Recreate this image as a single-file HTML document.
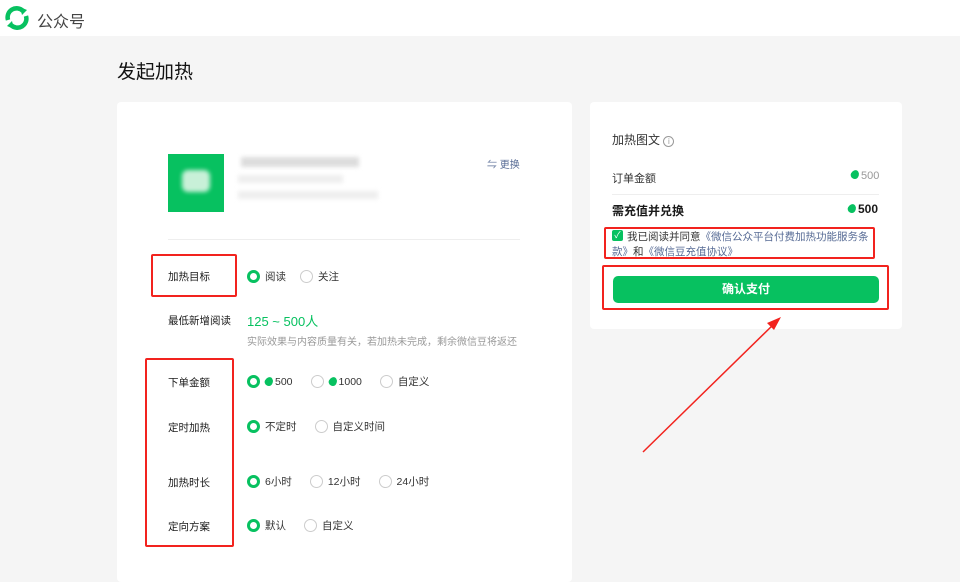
<!DOCTYPE html>
<html><head><meta charset="utf-8"><style>
*{margin:0;padding:0;box-sizing:border-box}
body{width:960px;height:570px;overflow:hidden;background:#f5f5f5;font-family:"Liberation Sans","Noto Sans CJK SC",sans-serif;color:#1a1a1a;position:relative}
.a{position:absolute;white-space:nowrap}
.hdr{position:absolute;left:0;top:0;width:960px;height:36px;background:#fff}
.card{position:absolute;background:#fff;border-radius:4px}
.lbl{font-size:10.5px;color:#1a1a1a}
.opt{font-size:10.5px;color:#333;display:flex;align-items:center}
.r{width:13px;height:13px;border-radius:50%;border:1px solid #ccc;display:inline-block;margin-right:5px}
.r.on{border:3px solid #07c160}
.red{position:absolute;border:2px solid #f2231e;border-radius:2px}
.bean{display:inline-block;width:8px;height:9px;background:#07c160;border-radius:50% 50% 50% 50%/60% 60% 40% 40%;transform:rotate(30deg);margin-right:2px}
.blur{position:absolute;background:#ddd;filter:blur(2px)}
</style></head><body>
<div class="hdr"></div>
<svg class="a" style="left:4px;top:5px" width="26" height="26" viewBox="0 0 26 26"><path d="M4 15A9 9 0 0 1 19 6" fill="none" stroke="#07c160" stroke-width="4.5"/><path d="M22 11A9 9 0 0 1 7 20" fill="none" stroke="#07c160" stroke-width="4.5"/><path d="M16 2l7 3-5 5z" fill="#07c160"/><path d="M10 24l-7-3 5-5z" fill="#07c160"/></svg>
<div class="a" style="left:37px;top:8px;font-size:16px;color:#444">公众号</div>
<div class="a" style="left:117px;top:57px;font-size:19px;color:#111">发起加热</div>

<div class="card" style="left:117px;top:102px;width:455px;height:480px"></div>
<div class="card" style="left:590px;top:102px;width:312px;height:227px"></div>

<div class="a" style="left:168px;top:154px;width:56px;height:58px;background:#07c160"></div>
<div class="a" style="left:182px;top:170px;width:28px;height:22px;background:#c8f0d8;filter:blur(2px);border-radius:6px"></div>
<div class="blur" style="left:241px;top:157px;width:118px;height:10px"></div>
<div class="blur" style="left:238px;top:175px;width:105px;height:8px;background:#eee"></div>
<div class="blur" style="left:238px;top:191px;width:140px;height:8px;background:#eee"></div>
<div class="a" style="left:487px;top:156px;font-size:10px;color:#576b95">⇋ 更换</div>
<div class="a" style="left:168px;top:239px;width:352px;height:1px;background:#eee"></div>

<div class="a lbl" style="left:168px;top:269px">加热目标</div>
<div class="a opt" style="left:247px;top:269px"><span class="r on"></span>阅读<span class="r" style="margin-left:14px"></span>关注</div>
<div class="a lbl" style="left:168px;top:313px">最低新增阅读</div>
<div class="a" style="left:247px;top:311px;font-size:13px;color:#07c160">125 ~ 500人</div>
<div class="a" style="left:247px;top:333px;font-size:10px;color:#999">实际效果与内容质量有关，若加热未完成，剩余微信豆将返还</div>
<div class="a lbl" style="left:168px;top:375px">下单金额</div>
<div class="a opt" style="left:247px;top:374px"><span class="r on"></span><span class="bean"></span>500<span class="r" style="margin-left:18px"></span><span class="bean"></span>1000<span class="r" style="margin-left:18px"></span>自定义</div>
<div class="a lbl" style="left:168px;top:420px">定时加热</div>
<div class="a opt" style="left:247px;top:419px"><span class="r on"></span>不定时<span class="r" style="margin-left:18px"></span>自定义时间</div>
<div class="a lbl" style="left:168px;top:475px">加热时长</div>
<div class="a opt" style="left:247px;top:474px"><span class="r on"></span>6小时<span class="r" style="margin-left:18px"></span>12小时<span class="r" style="margin-left:18px"></span>24小时</div>
<div class="a lbl" style="left:168px;top:519px">定向方案</div>
<div class="a opt" style="left:247px;top:518px"><span class="r on"></span>默认<span class="r" style="margin-left:18px"></span>自定义</div>

<div class="a" style="left:612px;top:131px;font-size:12px;color:#333">加热图文 <span style="display:inline-block;width:11px;height:11px;border:1px solid #999;border-radius:50%;font-size:8px;line-height:9px;text-align:center;color:#999">i</span></div>
<div class="a" style="left:612px;top:170px;font-size:11px;color:#333">订单金额</div>
<div class="a" style="left:851px;top:170px;font-size:11px;color:#999"><span class="bean"></span>500</div>
<div class="a" style="left:612px;top:194px;width:267px;height:1px;background:#eee"></div>
<div class="a" style="left:612px;top:202px;font-size:12px;font-weight:bold">需充值并兑换</div>
<div class="a" style="left:848px;top:202px;font-size:12px;font-weight:bold"><span class="bean"></span>500</div>
<div class="a" style="left:612px;top:230px;width:11px;height:11px;background:#07c160;border-radius:2px;color:#fff;font-size:9px;line-height:11px;text-align:center">✓</div>
<div class="a" style="left:627px;top:229px;font-size:10.5px;color:#333">我已阅读并同意<span style="color:#576b95">《微信公众平台付费加热功能服务条</span></div>
<div class="a" style="left:612px;top:244px;font-size:10.5px;color:#333"><span style="color:#576b95">款》</span>和<span style="color:#576b95">《微信豆充值协议》</span></div>
<div class="a" style="left:613px;top:276px;width:266px;height:27px;background:#07c160;border-radius:5px;color:#fff;font-size:12px;font-weight:bold;text-align:center;line-height:27px">确认支付</div>

<div class="red" style="left:151px;top:254px;width:86px;height:43px"></div>
<div class="red" style="left:145px;top:358px;width:89px;height:189px"></div>
<div class="red" style="left:604px;top:227px;width:271px;height:32px"></div>
<div class="red" style="left:602px;top:265px;width:287px;height:45px"></div>
<svg class="a" style="left:0;top:0" width="960" height="570"><line x1="643" y1="452" x2="776" y2="322" stroke="#f2231e" stroke-width="1.5"/><path d="M781 317 L767 323 L774 330 Z" fill="#f2231e"/></svg>
</body></html>
